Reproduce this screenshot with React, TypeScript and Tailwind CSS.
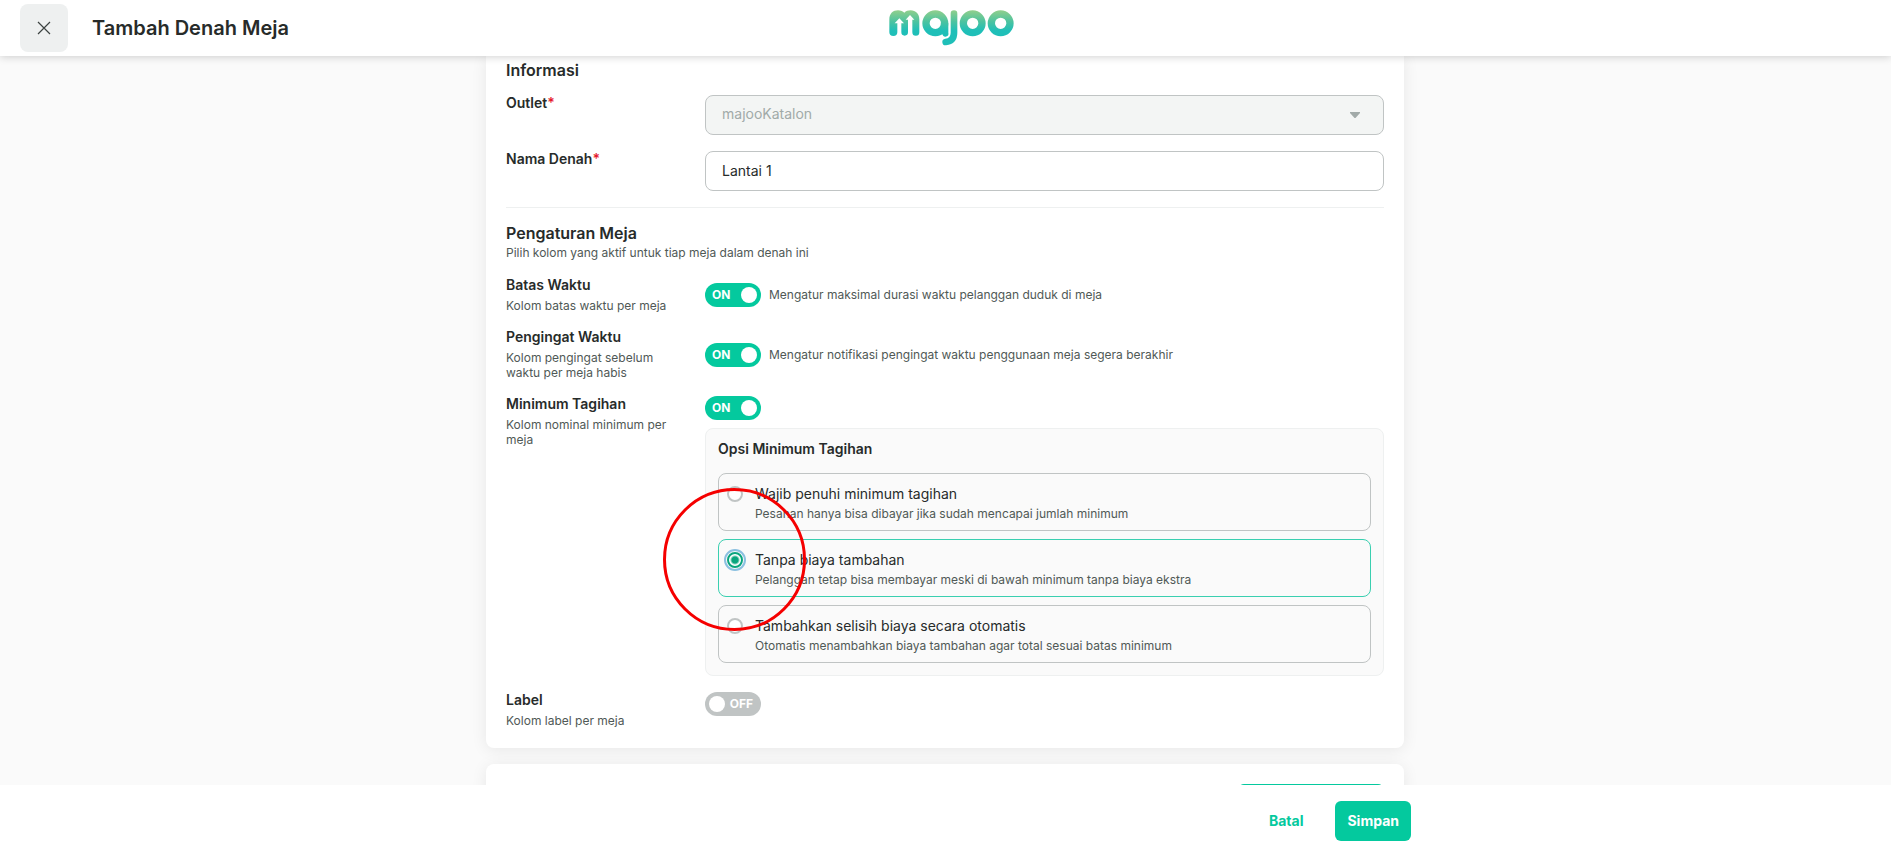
import { useState, type ReactNode } from 'react';

interface IFieldProps {
  label: string;
  htmlFor: string;
  children: ReactNode;
}

interface ISwitchProps {
  id: string;
  checked: boolean;
  onChange: (checked: boolean) => void;
}

interface ISettingRowProps extends ISwitchProps {
  label: string;
  hint: string;
  description?: string;
  alignTop?: boolean;
  children?: ReactNode;
}

const billOptions = [
  {
    value: 'required',
    title: 'Wajib penuhi minimum tagihan',
    description: 'Pesanan hanya bisa dibayar jika sudah mencapai jumlah minimum',
  },
  {
    value: 'free',
    title: 'Tanpa biaya tambahan',
    description: 'Pelanggan tetap bisa membayar meski di bawah minimum tanpa biaya ekstra',
  },
  {
    value: 'auto',
    title: 'Tambahkan selisih biaya secara otomatis',
    description: 'Otomatis menambahkan biaya tambahan agar total sesuai batas minimum',
  },
];

function Logo() {
  return (
    <svg width="126" height="38" viewBox="56 27 378 114" role="img" aria-label="majoo">
      <defs>
        <linearGradient id="logo" gradientUnits="userSpaceOnUse" x1="0" y1="30" x2="0" y2="108">
          <stop offset="0" stopColor="#93cf8b" />
          <stop offset="0.45" stopColor="#4cc3a0" />
          <stop offset="0.8" stopColor="#1fbfb8" />
        </linearGradient>
      </defs>
      <path
        fill="url(#logo)"
        d="M57 58C57 41 68 31 83 31C91 31 98 34 102 38C107 33 113 31 121 31C136 31 147 42 147 58V97A10 10 0 0 1 126 97V59H132L119 45L106 59H113V97A10 10 0 0 1 93 97V70H101L87 55L73 70H81V97A11 10 0 0 1 57 97Z"
      />
      <circle cx="195" cy="70" r="28" fill="none" stroke="url(#logo)" strokeWidth="22" />
      <path d="M211 70H234V98A9 9 0 0 1 216 103Z" fill="url(#logo)" />
      <path
        d="M251 41V98C251 115 241 124 226 126"
        fill="none"
        stroke="url(#logo)"
        strokeWidth="20"
        strokeLinecap="round"
      />
      <circle cx="307" cy="70" r="28" fill="none" stroke="url(#logo)" strokeWidth="22" />
      <circle cx="391" cy="70" r="28" fill="none" stroke="url(#logo)" strokeWidth="22" />
    </svg>
  );
}

function Switch({ id, checked, onChange }: ISwitchProps) {
  return (
    <label
      className={`relative flex h-6 w-14 shrink-0 cursor-pointer items-center justify-between rounded-full text-xs font-bold text-white ${
        checked ? 'bg-[#04c99e] pr-1 pl-[7px]' : 'flex-row-reverse bg-[#c0c4c4] pr-2 pl-1'
      }`}
    >
      <input
        id={id}
        type="checkbox"
        role="switch"
        className="sr-only"
        checked={checked}
        onChange={(e) => onChange(e.target.checked)}
      />
      <span>{checked ? 'ON' : 'OFF'}</span>
      <span className="size-4 rounded-full bg-white" />
    </label>
  );
}

function Field({ label, htmlFor, children }: IFieldProps) {
  return (
    <div className="flex gap-6">
      <label htmlFor={htmlFor} className="w-[175px] shrink-0 text-sm leading-4 font-semibold">
        {label}
        <span className="text-[#e5192d]">*</span>
      </label>
      <div className="relative flex-1">{children}</div>
    </div>
  );
}

function SettingRow({ label, hint, description, alignTop, children, ...rest }: ISettingRowProps) {
  return (
    <div className={`flex gap-6 ${alignTop ? 'items-start' : 'items-center'}`}>
      <div className="w-[175px] shrink-0">
        <label htmlFor={rest.id} className="block text-sm leading-4 font-semibold">
          {label}
        </label>
        <p className="mt-[5px] text-xs leading-[15px] text-[#505956]">{hint}</p>
      </div>
      <div className="flex-1">
        <div className="flex items-center gap-2">
          <Switch {...rest} />
          {description && <p className="text-xs text-[#505956]">{description}</p>}
        </div>
        {children}
      </div>
    </div>
  );
}

export default function App() {
  const [name, setName] = useState('Lantai 1');
  const [timeLimit, setTimeLimit] = useState(true);
  const [reminder, setReminder] = useState(true);
  const [minimumBill, setMinimumBill] = useState(true);
  const [tableLabel, setTableLabel] = useState(false);
  const [billOption, setBillOption] = useState('free');

  return (
    <div className="flex h-screen flex-col overflow-hidden bg-[#fafafa] font-[Inter,sans-serif] text-[#272b2a]">
      <header className="z-10 grid h-14 shrink-0 grid-cols-[1fr_auto_1fr] items-center bg-white pr-2 pl-5 shadow-[0_1px_8px_rgba(0,0,0,0.18)]">
        <div className="flex items-center gap-6">
          <button
            type="button"
            aria-label="Tutup"
            className="flex size-12 items-center justify-center rounded-lg bg-[#eef0f0]"
          >
            <svg width="14" height="14" viewBox="0 0 14 14" stroke="#3c4241" strokeWidth="1.2">
              <path d="M1 1L13 13M13 1L1 13" />
            </svg>
          </button>
          <h1 className="text-xl font-semibold">Tambah Denah Meja</h1>
        </div>
        <Logo />
      </header>

      <main className="min-h-0 flex-1 overflow-hidden">
        <div className="mx-auto max-w-[919px] pr-px">
          <section className="rounded-b-lg bg-white px-5 pt-0.5 pb-5 shadow-[0_2px_16px_rgba(0,0,0,0.08)]">
            <h2 className="text-base leading-6 font-semibold">Informasi</h2>
            <div className="mt-[13px] flex flex-col gap-4">
              <Field label="Outlet" htmlFor="outlet">
                <select
                  id="outlet"
                  disabled
                  className="block h-10 w-full appearance-none rounded-lg border border-[#c0c4c4] bg-[#f3f5f4] px-4 pb-0.5 text-sm text-[#a1aaa8] opacity-100"
                >
                  <option>majooKatalon</option>
                </select>
                <svg
                  className="pointer-events-none absolute top-[17px] right-6"
                  width="10"
                  height="6"
                  viewBox="0 0 10 6"
                  fill="#a1aaa8"
                >
                  <path d="M0 0H10V1L5.500 6H4.500L0 1Z" />
                </svg>
              </Field>
              <Field label="Nama Denah" htmlFor="name">
                <input
                  id="name"
                  type="text"
                  value={name}
                  onChange={(e) => setName(e.target.value)}
                  className="block h-10 w-full rounded-lg border border-[#c0c4c4] bg-white px-4 pb-0.5 text-sm"
                />
              </Field>
            </div>

            <hr className="mt-4 mb-[15px] border-[#eef0f0]" />

            <h2 className="text-base leading-5 font-semibold">Pengaturan Meja</h2>
            <p className="mt-0.5 text-xs leading-4 text-[#505956]">
              Pilih kolom yang aktif untuk tiap meja dalam denah ini
            </p>

            <div className="mt-4 flex flex-col gap-4">
              <SettingRow
                id="time-limit"
                label="Batas Waktu"
                hint="Kolom batas waktu per meja"
                description="Mengatur maksimal durasi waktu pelanggan duduk di meja"
                checked={timeLimit}
                onChange={setTimeLimit}
              />
              <SettingRow
                id="reminder"
                label="Pengingat Waktu"
                hint="Kolom pengingat sebelum waktu per meja habis"
                description="Mengatur notifikasi pengingat waktu penggunaan meja segera berakhir"
                checked={reminder}
                onChange={setReminder}
              />
              <SettingRow
                id="minimum-bill"
                label="Minimum Tagihan"
                hint="Kolom nominal minimum per meja"
                alignTop
                checked={minimumBill}
                onChange={setMinimumBill}
              >
                <div className="relative mt-2 rounded-lg border border-[#eef0f0] bg-[#fafafa] p-3">
                  <h3 className="text-sm leading-4 font-semibold">Opsi Minimum Tagihan</h3>
                  <div className="mt-4 flex flex-col gap-2">
                    {billOptions.map((option) => (
                      <label
                        key={option.value}
                        className={`flex items-start gap-3 rounded-lg border pt-2.5 pr-3 pb-2 pl-2 ${
                          billOption === option.value ? 'border-[#3acfb0]' : 'border-[#c0c4c4]'
                        }`}
                      >
                        <input
                          type="radio"
                          name="bill-option"
                          value={option.value}
                          checked={billOption === option.value}
                          onChange={() => setBillOption(option.value)}
                          className="mt-0.5 size-4 shrink-0 appearance-none rounded-full border-2 border-[#c0c4c4] bg-white checked:border-[#0aa57e] checked:bg-[radial-gradient(circle,#0aa57e_3px,#ffffff_5px)] checked:outline-2 checked:outline-offset-1 checked:outline-[#8bc0e0]"
                        />
                        <span>
                          <span className="block text-sm leading-5">{option.title}</span>
                          <span className="mt-0.5 block text-xs leading-4 text-[#505956]">
                            {option.description}
                          </span>
                        </span>
                      </label>
                    ))}
                  </div>
                  <div className="pointer-events-none absolute top-[59px] -left-[43px] size-[143px] rounded-full border-3 border-[#f50000]" />
                </div>
              </SettingRow>
              <SettingRow
                id="table-label"
                label="Label"
                hint="Kolom label per meja"
                alignTop
                checked={tableLabel}
                onChange={setTableLabel}
              />
            </div>
          </section>

          <section className="mt-4 flex justify-end rounded-lg bg-white px-5 pt-5 pb-5 shadow-[0_2px_16px_rgba(0,0,0,0.08)]">
            <button
              type="button"
              aria-label="Tambah Meja"
              className="h-10 w-[146px] rounded-md bg-[#04c99e]"
            />
          </section>
        </div>
      </main>

      <footer className="z-10 shrink-0 bg-white pt-4 pb-[7px]">
        <div className="mx-auto flex max-w-[931px] justify-end gap-5 text-sm font-bold">
          <button type="button" className="h-10 rounded-md px-3 text-[#04c99e]">
            Batal
          </button>
          <button type="button" className="h-10 rounded-md bg-[#04c99e] px-3 text-white">
            Simpan
          </button>
        </div>
      </footer>
    </div>
  );
}
